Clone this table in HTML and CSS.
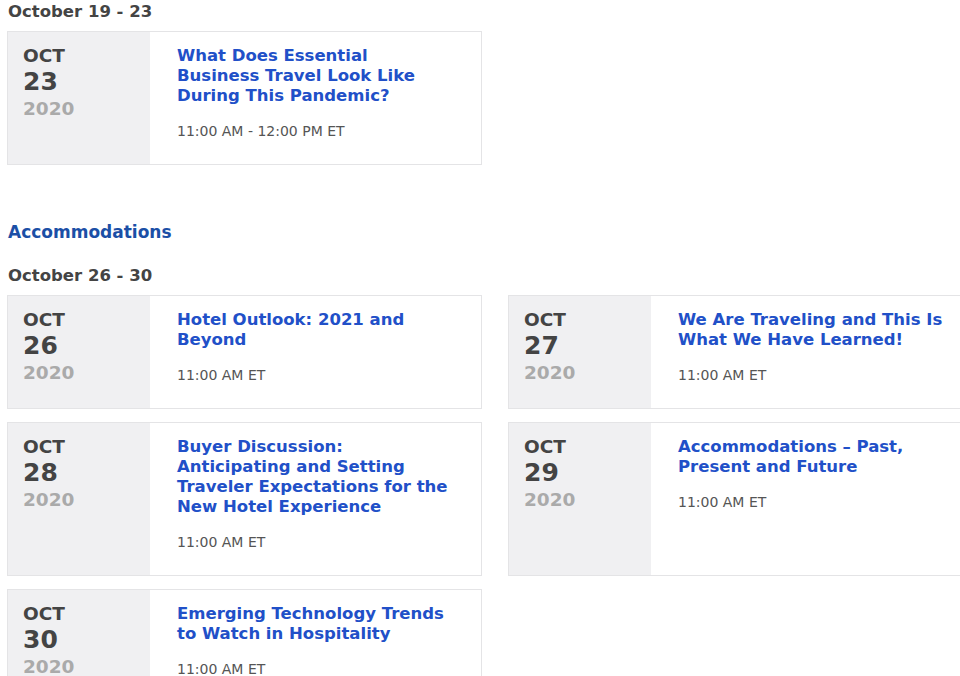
FILE: index.html
```html
<!DOCTYPE html>
<html>
<head>
<meta charset="utf-8">
<link rel="stylesheet" href="styles.css">
</head>
<body>
<div class="page">
  <h2 class="week">October 19 - 23</h2>
  <div class="grid">
    <div class="card">
      <div class="date"><div class="mon">OCT</div><div class="day">23</div><div class="yr">2020</div></div>
      <div class="info"><a class="title">What Does Essential Business Travel Look Like During This Pandemic?</a><div class="time">11:00 AM - 12:00 PM ET</div></div>
    </div>
  </div>

  <h2 class="cat">Accommodations</h2>
  <h2 class="week">October 26 - 30</h2>
  <div class="grid">
    <div class="card">
      <div class="date"><div class="mon">OCT</div><div class="day">26</div><div class="yr">2020</div></div>
      <div class="info"><a class="title">Hotel Outlook: 2021 and Beyond</a><div class="time">11:00 AM ET</div></div>
    </div>
    <div class="card">
      <div class="date"><div class="mon">OCT</div><div class="day">27</div><div class="yr">2020</div></div>
      <div class="info"><a class="title">We Are Traveling and This Is What We Have Learned!</a><div class="time">11:00 AM ET</div></div>
    </div>
    <div class="card">
      <div class="date"><div class="mon">OCT</div><div class="day">28</div><div class="yr">2020</div></div>
      <div class="info"><a class="title">Buyer Discussion: Anticipating and Setting Traveler Expectations for the New Hotel Experience</a><div class="time">11:00 AM ET</div></div>
    </div>
    <div class="card">
      <div class="date"><div class="mon">OCT</div><div class="day">29</div><div class="yr">2020</div></div>
      <div class="info"><a class="title">Accommodations – Past, Present and Future</a><div class="time">11:00 AM ET</div></div>
    </div>
    <div class="card">
      <div class="date"><div class="mon">OCT</div><div class="day">30</div><div class="yr">2020</div></div>
      <div class="info"><a class="title">Emerging Technology Trends to Watch in Hospitality</a><div class="time">11:00 AM ET</div></div>
    </div>
  </div>
</div>
</body>
</html>
```
FILE: styles.css
```css
html, body {
  margin: 0;
  padding: 0;
  background: #fff;
  overflow: hidden;
}
.page {
  width: 990px;
  padding: 2px 0 0 7px;
  font-family: "DejaVu Sans", "Liberation Sans", sans-serif;
}
h2 {
  margin: 0;
  font-size: 16.5px;
  line-height: 20px;
  font-weight: 700;
  padding-left: 1px;
}
.week {
  color: #444;
  margin-bottom: 9px;
}
.cat {
  color: #1b4fa6;
  font-size: 17px;
  margin-top: 57px;
  margin-bottom: 24px;
}
.grid {
  display: grid;
  grid-template-columns: 475px 475px;
  gap: 13px 26px;
}
.card {
  display: flex;
  border: 1px solid #e4e4e6;
  background: #fff;
}
.date {
  width: 142px;
  flex: none;
  background: #f0f0f2;
  padding: 13px 0 0 15px;
  box-sizing: border-box;
  font-weight: 700;
}
.mon {
  font-size: 18.5px;
  line-height: 21px;
  color: #444;
}
.day {
  font-size: 25px;
  line-height: 31px;
  color: #444;
}
.yr {
  font-size: 18.5px;
  line-height: 24px;
  color: #aaa;
}
.info {
  padding: 14px 28px 24px 27px;
  flex: 1;
}
.title {
  display: block;
  color: #2150c8;
  font-weight: 700;
  font-size: 16.5px;
  line-height: 20px;
}
.time {
  margin-top: 16px;
  font-size: 14px;
  line-height: 18px;
  color: #555;
}
```
